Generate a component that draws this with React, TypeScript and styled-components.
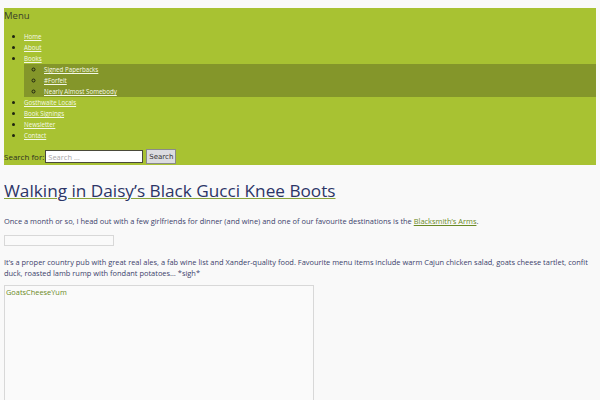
import React from "react";
import styled, { createGlobalStyle } from "styled-components";

const GlobalStyle = createGlobalStyle`
  html, body {
    margin: 0;
    background: #f9f9f9;
  }
  body {
    padding: 8px 4px 0 4px;
    font-family: "Open Sans", "Liberation Sans", sans-serif;
    color: #3b3f6b;
  }
`;

const Header = styled.nav`
  background-color: #a8c232;
  padding-bottom: 1px;
`;

const MenuTitle = styled.div`
  font-size: 9.5px;
  line-height: 16px;
  color: #3a3f2a;
`;

const NavList = styled.ul<{ $sub?: boolean }>`
  list-style: ${p => (p.$sub ? "circle" : "disc")};
  margin: ${p => (p.$sub ? "0" : "7px 0 0 0")};
  padding-left: 20px;
  background-color: ${p => (p.$sub ? "#84962a" : "transparent")};
  font-size: 6.2px;
  line-height: 11px;
  color: #1f2410;
`;

const NavItem = styled.li`
  &::marker {
    font-size: 7.5px;
    line-height: 0;
  }
`;

const NavLink = styled.a`
  color: #f4f8e6;
  text-decoration: underline;
`;

const SearchRow = styled.form`
  display: flex;
  align-items: center;
  margin-top: 8px;
  height: 15px;
  font-size: 8px;
  color: #2e3320;
`;

const SearchLabel = styled.label`
  margin-right: 1px;
`;

const SearchInput = styled.input`
  box-sizing: border-box;
  width: 98px;
  height: 13px;
  margin: 0 3px 0 0;
  padding: 0 2px;
  border: 1px solid #4a4a3a;
  background: #ffffff;
  font-family: inherit;
  font-size: 7.5px;
  &::placeholder {
    color: #a8a8a8;
  }
`;

const SearchButton = styled.button`
  box-sizing: border-box;
  width: 30px;
  height: 15px;
  padding: 0;
  border: 1px solid #8a8a8a;
  background: #dcdce0;
  font-family: "DejaVu Sans", sans-serif;
  font-size: 7px;
  color: #333;
`;

const Title = styled.h1`
  margin: 14px 0 0 0;
  font-size: 17.2px;
  font-weight: 400;
  line-height: 24px;
  a {
    color: #2c3567;
    text-decoration: underline;
    text-decoration-color: #8aa43a;
    text-decoration-thickness: 1px;
  }
`;

const Paragraph = styled.p<{ $gap: number }>`
  margin: ${p => p.$gap}px 0 0 0;
  font-size: 7.45px;
  line-height: 11px;
  color: #3b3f6b;
  padding-right: 8px;
`;

const GreenLink = styled.a`
  color: #6b8a26;
  text-decoration: underline;
`;

const Frame = styled.div<{ $w: number; $h: number; $gap: number }>`
  box-sizing: border-box;
  width: ${p => p.$w}px;
  height: ${p => p.$h}px;
  margin-top: ${p => p.$gap}px;
  border: 1px solid #d8d8d8;
  background: #fafafa;
  font-size: 7.4px;
  line-height: 12px;
  color: #6b8a26;
  padding: 0 1px;
`;

const Post = styled.article`
  display: flex;
  flex-direction: column;
`;

const menu = ["Home", "About", "Books"];
const books = ["Signed Paperbacks", "#Forfeit", "Nearly Almost Somebody"];
const rest = ["Gosthwaite Locals", "Book Signings", "Newsletter", "Contact"];

export default function App() {
  return (
    <>
      <GlobalStyle />
      <Header>
        <MenuTitle>Menu</MenuTitle>
        <NavList>
          {menu.map(m => (
            <NavItem key={m}>
              <NavLink href="#">{m}</NavLink>
              {m === "Books" && (
                <NavList $sub>
                  {books.map(b => (
                    <NavItem key={b}>
                      <NavLink href="#">{b}</NavLink>
                    </NavItem>
                  ))}
                </NavList>
              )}
            </NavItem>
          ))}
          {rest.map(m => (
            <NavItem key={m}>
              <NavLink href="#">{m}</NavLink>
            </NavItem>
          ))}
        </NavList>
        <SearchRow onSubmit={e => e.preventDefault()}>
          <SearchLabel>Search for:</SearchLabel>
          <SearchInput placeholder="Search …" />
          <SearchButton type="submit">Search</SearchButton>
        </SearchRow>
      </Header>
      <Post>
        <Title>
          <a href="#">Walking in Daisy’s Black Gucci Knee Boots</a>
        </Title>
        <Paragraph $gap={13}>
          Once a month or so, I head out with a few girlfriends for dinner (and wine) and one of our
          favourite destinations is the <GreenLink href="#">Blacksmith’s Arms</GreenLink>.
        </Paragraph>
        <Frame $w={110} $h={11} $gap={8} />
        <Paragraph $gap={11}>
          It’s a proper country pub with great real ales, a fab wine list and Xander-quality food.
          Favourite menu items include warm Cajun chicken salad, goats cheese tartlet, confit duck,
          roasted lamb rump with fondant potatoes… *sigh*
        </Paragraph>
        <Frame $w={310} $h={116} $gap={6}>
          GoatsCheeseYum
        </Frame>
      </Post>
    </>
  );
}
